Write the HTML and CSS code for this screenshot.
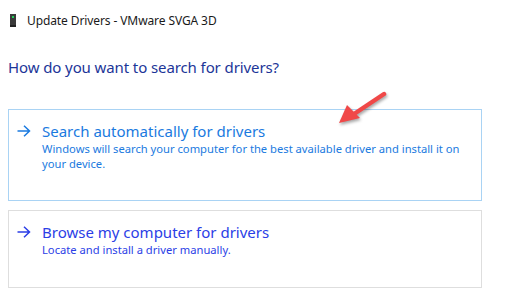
FILE: index.html
```html
<!DOCTYPE html>
<html lang="en">
  <head>
    <meta charset="UTF-8">
    <title>Update Drivers</title>
    <link rel="stylesheet" href="styles.css">
  </head>
  <body>
    <div class="window">
      <header class="titlebar">
        <span class="device-icon"><span class="led"></span></span>
        <span class="title">Update Drivers - VMware SVGA 3D</span>
      </header>

      <h1 class="question">How do you want to search for drivers?</h1>

      <div class="options">
        <div class="option option-hover">
          <svg class="go" width="14" height="12" viewBox="0 0 14 12">
            <path d="M0.5 6 H12.5 M7 0.8 L12.5 6 L7 11.2" fill="none" stroke="currentColor" stroke-width="1.5"/>
          </svg>
          <div class="option-text">
            <div class="option-title">Search automatically for drivers</div>
            <p class="option-desc">Windows will search your computer for the best available driver and install it on your device.</p>
          </div>
        </div>

        <div class="option option-short">
          <svg class="go" width="14" height="12" viewBox="0 0 14 12">
            <path d="M0.5 6 H12.5 M7 0.8 L12.5 6 L7 11.2" fill="none" stroke="currentColor" stroke-width="1.5"/>
          </svg>
          <div class="option-text">
            <div class="option-title">Browse my computer for drivers</div>
            <p class="option-desc">Locate and install a driver manually.</p>
          </div>
        </div>
      </div>

      <!-- annotation arrow over the screenshot -->
      <svg class="pointer" width="60" height="40" viewBox="0 0 60 40">
        <line x1="52" y1="4" x2="22" y2="24" stroke="#f04848" stroke-width="4.5" stroke-linecap="round"/>
        <polygon points="7,33 15,15 28,28" fill="#f04848"/>
      </svg>
    </div>
  </body>
</html>
```

FILE: styles.css
```css
:root {
  --link-blue: #1a7ae0;
  --link-violet: #2b3ee6;
  --heading-blue: #1c3598;
  --text: #1a1a1a;
  --border-hover: #a9d3f4;
  --border: #dedede;
}

* {
  margin: 0;
  padding: 0;
  box-sizing: border-box;
}

body {
  font-family: 'Noto Sans', 'Open Sans', sans-serif;
  background-color: #fff;
  color: var(--text);
  width: 521px;
  height: 296px;
  overflow: hidden;
}

.window {
  position: relative;
  height: 100%;
}

.titlebar {
  display: flex;
  align-items: center;
  gap: 11px;
  padding: 11px 0 0 10px;
  height: 29px;
}

.device-icon {
  position: relative;
  display: block;
  width: 6px;
  height: 13px;
  background-color: #3a3a3a;
  border-bottom: 2px solid #222;
}

.led {
  position: absolute;
  top: 2px;
  left: 2px;
  width: 2px;
  height: 2px;
  background-color: #22d05a;
}

.title {
  font-size: 12px;
  letter-spacing: -0.1px;
}

.question {
  font-size: 15px;
  font-weight: 400;
  color: var(--heading-blue);
  margin: 28px 0 0 8px;
  line-height: 20px;
  letter-spacing: -0.1px;
}

.options {
  display: flex;
  flex-direction: column;
  gap: 9px;
  margin: 32px 0 0 8px;
  width: 474px;
}

.option {
  display: flex;
  align-items: flex-start;
  border: 1px solid var(--border);
  padding: 10px 10px 0 8px;
  height: 92px;
  color: var(--link-blue);
}

.option-hover {
  border-color: var(--border-hover);
}

.option-short {
  height: 78px;
  color: var(--link-violet);
}

.go {
  flex: none;
  margin: 5px 11px 0 0;
}

.option-text {
  flex: 1;
}

.option-title {
  font-size: 15px;
  line-height: 22px;
}

.option-desc {
  font-size: 11.2px;
  line-height: 15px;
  margin-top: -1px;
}

.pointer {
  position: absolute;
  left: 332px;
  top: 90px;
  filter: drop-shadow(1px 2px 1.5px rgba(0, 0, 0, 0.35));
}
```
